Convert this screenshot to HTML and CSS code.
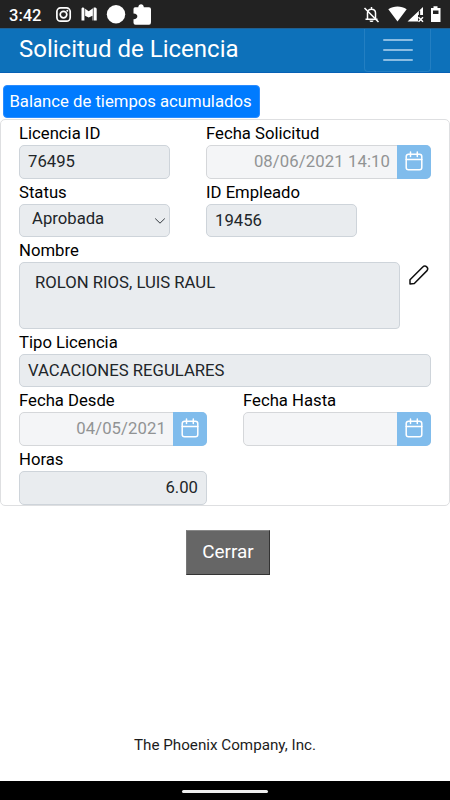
FILE: index.html
```html
<!DOCTYPE html>
<html lang="es">
<head>
<meta charset="utf-8">
<title>Solicitud de Licencia</title>
<link rel="stylesheet" href="styles.css">
</head>
<body>
<svg width="0" height="0" class="defs" aria-hidden="true">
  <symbol id="calendar" viewBox="0 0 18 20"><g fill="none" stroke="currentColor" stroke-width="1.5" stroke-linecap="round"><rect x="1.2" y="3.2" width="15.6" height="15.6" rx="2.3"/><path d="M1.2 8.5h15.6M5.5 1v4.500M12.300 1v4.500"/></g></symbol>
</svg>
<div class="statusbar">
  <span class="time">3:42</span>
  <svg class="notifications" width="98" height="28" viewBox="0 0 98 28" fill="#fff">
    <g fill="none" stroke="#fff" stroke-width="1.7"><rect x="2.9" y="7.9" width="13.3" height="13.3" rx="3.7"/><circle cx="9.5" cy="14.6" r="3.3"/></g><circle cx="13.3" cy="10.8" r="1"/>
    <path d="M27.500 9c0-1.300 1-1.800 2.200-1.300l5 3.600 5-3.600c1.200-.5 3 0 3 1.300v11.500h-4.200v-4.700l-3.800 1.700-3.800-1.700v4.700h-3.400z"/>
    <path d="M30.700 8v13M39.300 8v13" stroke="#222" stroke-width=".7"/>
    <circle cx="62" cy="14.300" r="9.200"/>
    <path d="M81 7.200h3.300c0-4 5.500-4 5.500 0H95q2 0 2 2v13q0 2.500-2 2.500H81.500q-2 0-2-2v-3.500c4.800.3 5.500-5.400 0-5.600V9q0-1.800 1.500-1.800z"/>
  </svg>
  <svg class="system" width="80" height="28" viewBox="0 0 80 28" fill="#fff">
    <g fill="none" stroke="#fff" stroke-width="1.500"><path d="M4.500 19.300h12M6.500 19v-6c0-5 8-5 8 0v6M10.500 9V7"/><path d="M3.500 8l14 14" stroke-width="1.600"/></g><path d="M8.500 20.500h4c0 2-4 2-4 0z"/>
    <path d="M27.300 9.300c5.400-3.700 13-3.700 18.400 0L36.500 21.500z"/>
    <path d="M46.500 21.500L62 7v8h-5v6.500z"/><path d="M58.500 10.500V15" stroke="#222" stroke-width="1.300"/><path d="M57.500 17.200l4.500 4.500m0-4.500l-4.500 4.500" stroke="#fff" stroke-width="1.500"/>
    <path fill-rule="evenodd" d="M70 8h2.500V6.300h4V8H79.500v14H70zM72 10.500V14h5.500v-3.500z"/>
  </svg>
</div>
<header class="navbar">
  <h1>Solicitud de Licencia</h1>
  <button class="toggler" aria-label="Menú"><i></i><i></i><i></i></button>
</header>
<main>
  <button class="balance">Balance de tiempos acumulados</button>
  <form class="card">
    <div class="row">
      <div class="field short"><label>Licencia ID</label><div class="control">76495</div></div>
      <div class="field created"><label>Fecha Solicitud</label><div class="control date"><span>08/06/2021 14:10</span><b><svg><use href="#calendar"/></svg></b></div></div>
    </div>
    <div class="row">
      <div class="field short"><label>Status</label><div class="control select"><span>Aprobada</span><svg width="12" height="8" viewBox="0 0 12 8"><path d="M1.200 1.500L6 6.200l4.800-4.700" fill="none" stroke="#343a40" stroke-width="1"/></svg></div></div>
      <div class="field short"><label>ID Empleado</label><div class="control">19456</div></div>
    </div>
    <div class="field"><label>Nombre</label>
      <div class="name"><div class="control area">ROLON RIOS, LUIS RAUL</div>
      <svg class="pencil" width="20" height="20" viewBox="0 0 20 20"><path d="M1 14.800L13.500 2.200c3-3 6.800.8 4.300 3.700L5.300 18.500L1 19z" fill="none" stroke="#111" stroke-width="1.500" stroke-linejoin="round"/></svg></div>
    </div>
    <div class="field"><label>Tipo Licencia</label><div class="control type">VACACIONES REGULARES</div></div>
    <div class="row dates">
      <div class="field half"><label>Fecha Desde</label><div class="control date"><span>04/05/2021</span><b><svg><use href="#calendar"/></svg></b></div></div>
      <div class="field half"><label>Fecha Hasta</label><div class="control date"><span></span><b><svg><use href="#calendar"/></svg></b></div></div>
    </div>
    <div class="field half"><label>Horas</label><div class="control hours">6.00</div></div>
  </form>
  <button class="close">Cerrar</button>
</main>
<footer>The Phoenix Company, Inc.</footer>
<div class="gesture"><i></i></div>
</body>
</html>
```
FILE: styles.css
```css
* { box-sizing: border-box; }
body {
  margin: 0;
  height: 800px;
  display: flex;
  flex-direction: column;
  overflow: hidden;
  background: #fff;
  color: #1c1c1c;
  font: 400 16.7px Roboto, sans-serif;
}
button { font: inherit; padding: 0; margin: 0; }
.defs { display: none; }
.statusbar {
  height: 28px;
  flex: none;
  display: flex;
  background: #222;
  color: #fff;
}
.time { width: 54px; padding-left: 9px; font-size: 16.500px; font-weight: 500; line-height: 31px; white-space: nowrap; }
.system { margin: 0 9px 0 auto; }
.navbar {
  height: 45px;
  flex: none;
  display: flex;
  justify-content: space-between;
  padding: 0 19px;
  background: #0d71ba;
  border-top: 1px solid #205f90;
  border-bottom: 1px solid #0761b5;
}
h1 { margin: 0; color: #fff; font-size: 24px; font-weight: 400; line-height: 40px; }
.toggler {
  width: 67px;
  height: 43px;
  display: flex;
  flex-direction: column;
  align-items: center;
  justify-content: flex-start;
  gap: 8px;
  padding-top: 10px;
  background: none;
  border: 1px solid #237fc2;
  border-top: 0;
  border-radius: 0 0 4px 4px;
}
.toggler i { width: 30px; height: 2px; border-radius: 1px; background: #8abce2; }
main { flex: 1; display: flex; flex-direction: column; padding-top: 12px; }
.balance {
  width: 257px;
  height: 33px;
  flex: none;
  margin-left: 3px;
  border: 1px solid #2b8cff;
  border-radius: 4px;
  background: #007bff;
  color: #fff;
  white-space: nowrap;
  padding: 0 2px 0 0;
}
.card {
  height: 386.500px;
  flex: none;
  margin-top: 1px;
  padding: 0 18px;
  border: 1px solid #dedfe1;
  border-radius: 5px;
}
.row { display: flex; gap: 36px; }
label { display: block; height: 25.100px; line-height: 27.500px; color: #000; white-space: nowrap; }
.control {
  height: 33.500px;
  padding: 0 8px;
  border: 1px solid #ced4da;
  border-radius: 5px;
  background: #e9ecef;
  color: #212529;
  line-height: 31px;
  white-space: nowrap;
}
.short { width: 151px; }
.created { width: 225px; }
.half { width: 188px; }
.date { display: flex; padding: 0; background: #f4f5f7; border-color: #d5d7da; color: #919394; text-align: right; }
.date span { flex: 1; padding-right: 8px; letter-spacing: .1px; }
.date b { display: grid; place-items: center; width: 34px; margin: -1px; border-radius: 0 5px 5px 0; background: #80bcec; color: #fff; }
.date svg { width: 18px; height: 20px; margin-top: -2px; }
.select { display: flex; justify-content: space-between; padding: 0 3px 0 12px; line-height: 28px; }
.select svg { margin-top: 12px; }
.name { display: flex; gap: 9px; }
.area { width: 381px; height: 66.500px; padding: 4px 15px; border-bottom-right-radius: 4px; }
.pencil { margin-top: 3px; }
.hours { text-align: right; }
.close {
  width: 84px;
  height: 45px;
  align-self: center;
  margin: 24px 0 0 6px;
  padding-bottom: 1px;
  border: 1px solid #333;
  border-top-color: #888;
  border-left-color: #777;
  background: #666;
  color: #fff;
  font-size: 18.900px;
}
footer { height: 36px; margin-bottom: 18px; flex: none; text-align: center; font-size: 15.200px; line-height: 37px; }
.gesture { height: 19px; flex: none; display: flex; background: #000; }
.gesture i { width: 86px; height: 3px; margin: 9px 0 0 182px; border-radius: 2px; background: #eee; }
```
